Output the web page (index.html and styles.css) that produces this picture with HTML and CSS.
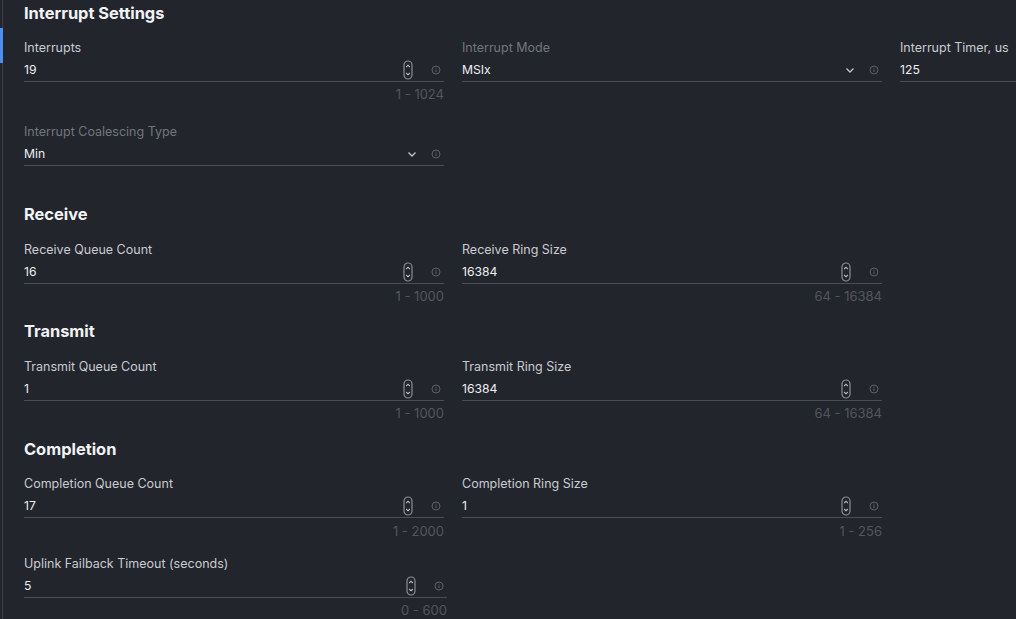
FILE: index.html
```html
<!DOCTYPE html>
<html>
<head>
<meta charset="utf-8">
<link rel="stylesheet" href="styles.css">
</head>
<body>
<div class="page">
  <div class="rail"><div class="rail-marker"></div></div>
  <main class="content">
    <section class="section section-interrupt">
      <h2 class="heading">Interrupt Settings</h2>
      <div class="grid grid-interrupt">
        <div class="field">
          <div class="label">Interrupts</div>
          <div class="input">
            <span class="value">19</span>
            <svg class="spin" width="10" height="20" viewBox="0 0 10 20"><rect x="1" y="1" width="8" height="18" rx="4" fill="none" stroke="#8b8e95" stroke-width="1.2"/><path d="M3.2 7 L5 5.2 L6.8 7" fill="none" stroke="#b9bcc1" stroke-width="1.1"/><path d="M3.2 13 L5 14.8 L6.8 13" fill="none" stroke="#b9bcc1" stroke-width="1.1"/></svg>
            <svg class="info" width="10" height="10" viewBox="0 0 10 10"><circle cx="5" cy="5" r="4" fill="none" stroke="#5d6067" stroke-width="1"/><path d="M5 4.3 V7" stroke="#5d6067" stroke-width="1"/><circle cx="5" cy="3" r="0.6" fill="#5d6067"/></svg>
          </div>
          <div class="hint">1 - 1024</div>
        </div>
        <div class="field">
          <div class="label label-dim">Interrupt Mode</div>
          <div class="input">
            <span class="value">MSIx</span>
            <svg class="chev" width="10" height="10" viewBox="0 0 10 10"><path d="M1.5 3.5 L5 7 L8.5 3.5" fill="none" stroke="#c3c5ca" stroke-width="1.3"/></svg>
            <svg class="info" width="10" height="10" viewBox="0 0 10 10"><circle cx="5" cy="5" r="4" fill="none" stroke="#5d6067" stroke-width="1"/><path d="M5 4.3 V7" stroke="#5d6067" stroke-width="1"/><circle cx="5" cy="3" r="0.6" fill="#5d6067"/></svg>
          </div>
        </div>
        <div class="field">
          <div class="label">Interrupt Timer, us</div>
          <div class="input">
            <span class="value">125</span>
          </div>
        </div>
        <div class="field">
          <div class="label label-dim">Interrupt Coalescing Type</div>
          <div class="input">
            <span class="value">Min</span>
            <svg class="chev" width="10" height="10" viewBox="0 0 10 10"><path d="M1.5 3.5 L5 7 L8.5 3.5" fill="none" stroke="#c3c5ca" stroke-width="1.3"/></svg>
            <svg class="info" width="10" height="10" viewBox="0 0 10 10"><circle cx="5" cy="5" r="4" fill="none" stroke="#5d6067" stroke-width="1"/><path d="M5 4.3 V7" stroke="#5d6067" stroke-width="1"/><circle cx="5" cy="3" r="0.6" fill="#5d6067"/></svg>
          </div>
          <div class="hint"></div>
        </div>
      </div>
    </section>

    <section class="section section-receive">
      <h2 class="heading">Receive</h2>
      <div class="grid">
        <div class="field">
          <div class="label">Receive Queue Count</div>
          <div class="input">
            <span class="value">16</span>
            <svg class="spin" width="10" height="20" viewBox="0 0 10 20"><rect x="1" y="1" width="8" height="18" rx="4" fill="none" stroke="#8b8e95" stroke-width="1.2"/><path d="M3.2 7 L5 5.2 L6.8 7" fill="none" stroke="#b9bcc1" stroke-width="1.1"/><path d="M3.2 13 L5 14.8 L6.8 13" fill="none" stroke="#b9bcc1" stroke-width="1.1"/></svg>
            <svg class="info" width="10" height="10" viewBox="0 0 10 10"><circle cx="5" cy="5" r="4" fill="none" stroke="#5d6067" stroke-width="1"/><path d="M5 4.3 V7" stroke="#5d6067" stroke-width="1"/><circle cx="5" cy="3" r="0.6" fill="#5d6067"/></svg>
          </div>
          <div class="hint">1 - 1000</div>
        </div>
        <div class="field">
          <div class="label">Receive Ring Size</div>
          <div class="input">
            <span class="value">16384</span>
            <svg class="spin" width="10" height="20" viewBox="0 0 10 20"><rect x="1" y="1" width="8" height="18" rx="4" fill="none" stroke="#8b8e95" stroke-width="1.2"/><path d="M3.2 7 L5 5.2 L6.8 7" fill="none" stroke="#b9bcc1" stroke-width="1.1"/><path d="M3.2 13 L5 14.8 L6.8 13" fill="none" stroke="#b9bcc1" stroke-width="1.1"/></svg>
            <svg class="info" width="10" height="10" viewBox="0 0 10 10"><circle cx="5" cy="5" r="4" fill="none" stroke="#5d6067" stroke-width="1"/><path d="M5 4.3 V7" stroke="#5d6067" stroke-width="1"/><circle cx="5" cy="3" r="0.6" fill="#5d6067"/></svg>
          </div>
          <div class="hint">64 - 16384</div>
        </div>
      </div>
    </section>

    <section class="section">
      <h2 class="heading">Transmit</h2>
      <div class="grid">
        <div class="field">
          <div class="label">Transmit Queue Count</div>
          <div class="input">
            <span class="value">1</span>
            <svg class="spin" width="10" height="20" viewBox="0 0 10 20"><rect x="1" y="1" width="8" height="18" rx="4" fill="none" stroke="#8b8e95" stroke-width="1.2"/><path d="M3.2 7 L5 5.2 L6.8 7" fill="none" stroke="#b9bcc1" stroke-width="1.1"/><path d="M3.2 13 L5 14.8 L6.8 13" fill="none" stroke="#b9bcc1" stroke-width="1.1"/></svg>
            <svg class="info" width="10" height="10" viewBox="0 0 10 10"><circle cx="5" cy="5" r="4" fill="none" stroke="#5d6067" stroke-width="1"/><path d="M5 4.3 V7" stroke="#5d6067" stroke-width="1"/><circle cx="5" cy="3" r="0.6" fill="#5d6067"/></svg>
          </div>
          <div class="hint">1 - 1000</div>
        </div>
        <div class="field">
          <div class="label">Transmit Ring Size</div>
          <div class="input">
            <span class="value">16384</span>
            <svg class="spin" width="10" height="20" viewBox="0 0 10 20"><rect x="1" y="1" width="8" height="18" rx="4" fill="none" stroke="#8b8e95" stroke-width="1.2"/><path d="M3.2 7 L5 5.2 L6.8 7" fill="none" stroke="#b9bcc1" stroke-width="1.1"/><path d="M3.2 13 L5 14.8 L6.8 13" fill="none" stroke="#b9bcc1" stroke-width="1.1"/></svg>
            <svg class="info" width="10" height="10" viewBox="0 0 10 10"><circle cx="5" cy="5" r="4" fill="none" stroke="#5d6067" stroke-width="1"/><path d="M5 4.3 V7" stroke="#5d6067" stroke-width="1"/><circle cx="5" cy="3" r="0.6" fill="#5d6067"/></svg>
          </div>
          <div class="hint">64 - 16384</div>
        </div>
      </div>
    </section>

    <section class="section section-completion">
      <h2 class="heading">Completion</h2>
      <div class="grid grid-completion">
        <div class="field">
          <div class="label">Completion Queue Count</div>
          <div class="input">
            <span class="value">17</span>
            <svg class="spin" width="10" height="20" viewBox="0 0 10 20"><rect x="1" y="1" width="8" height="18" rx="4" fill="none" stroke="#8b8e95" stroke-width="1.2"/><path d="M3.2 7 L5 5.2 L6.8 7" fill="none" stroke="#b9bcc1" stroke-width="1.1"/><path d="M3.2 13 L5 14.8 L6.8 13" fill="none" stroke="#b9bcc1" stroke-width="1.1"/></svg>
            <svg class="info" width="10" height="10" viewBox="0 0 10 10"><circle cx="5" cy="5" r="4" fill="none" stroke="#5d6067" stroke-width="1"/><path d="M5 4.3 V7" stroke="#5d6067" stroke-width="1"/><circle cx="5" cy="3" r="0.6" fill="#5d6067"/></svg>
          </div>
          <div class="hint hint-low">1 - 2000</div>
        </div>
        <div class="field">
          <div class="label">Completion Ring Size</div>
          <div class="input">
            <span class="value">1</span>
            <svg class="spin" width="10" height="20" viewBox="0 0 10 20"><rect x="1" y="1" width="8" height="18" rx="4" fill="none" stroke="#8b8e95" stroke-width="1.2"/><path d="M3.2 7 L5 5.2 L6.8 7" fill="none" stroke="#b9bcc1" stroke-width="1.1"/><path d="M3.2 13 L5 14.8 L6.8 13" fill="none" stroke="#b9bcc1" stroke-width="1.1"/></svg>
            <svg class="info" width="10" height="10" viewBox="0 0 10 10"><circle cx="5" cy="5" r="4" fill="none" stroke="#5d6067" stroke-width="1"/><path d="M5 4.3 V7" stroke="#5d6067" stroke-width="1"/><circle cx="5" cy="3" r="0.6" fill="#5d6067"/></svg>
          </div>
          <div class="hint hint-low">1 - 256</div>
        </div>
      </div>
      <div class="field field-wide">
        <div class="label">Uplink Failback Timeout (seconds)</div>
        <div class="input">
          <span class="value">5</span>
          <svg class="spin" width="10" height="20" viewBox="0 0 10 20"><rect x="1" y="1" width="8" height="18" rx="4" fill="none" stroke="#8b8e95" stroke-width="1.2"/><path d="M3.2 7 L5 5.2 L6.8 7" fill="none" stroke="#b9bcc1" stroke-width="1.1"/><path d="M3.2 13 L5 14.8 L6.8 13" fill="none" stroke="#b9bcc1" stroke-width="1.1"/></svg>
          <svg class="info" width="10" height="10" viewBox="0 0 10 10"><circle cx="5" cy="5" r="4" fill="none" stroke="#5d6067" stroke-width="1"/><path d="M5 4.3 V7" stroke="#5d6067" stroke-width="1"/><circle cx="5" cy="3" r="0.6" fill="#5d6067"/></svg>
        </div>
        <div class="hint">0 - 600</div>
      </div>
    </section>
  </main>
</div>
</body>
</html>
```

FILE: styles.css
```css
html, body {
  margin: 0;
  padding: 0;
  background: #22252c;
  height: 100%;
  overflow: hidden;
}

body {
  font-family: Inter, "Noto Sans", sans-serif;
  color: #e6e7ea;
}

.page {
  display: flex;
  height: 619px;
  width: 1016px;
  overflow: hidden;
}

.rail {
  position: relative;
  flex: 0 0 3px;
  border-right: 1px solid #3b3e46;
  box-sizing: border-box;
  width: 3px;
}

.rail-marker {
  position: absolute;
  left: 0;
  top: 28px;
  width: 3px;
  height: 35px;
  background: #4f8ef2;
}

.content {
  flex: 1;
  padding-left: 21px;
  padding-top: 3px;
  min-width: 0;
}

.section {
  margin-bottom: 18px;
}

.section-interrupt {
  margin-bottom: 18px;
}

.section-receive {
  margin-bottom: 17px;
}

.heading {
  margin: 0 0 17px 0;
  font-size: 16.4px;
  line-height: 20px;
  font-weight: 700;
  color: #f2f3f5;
}

.section-interrupt .heading,
.section-completion .heading {
  margin-bottom: 16px;
}

.grid {
  display: grid;
  grid-template-columns: 420px 420px 420px;
  column-gap: 18px;
  row-gap: 16px;
}

.grid-interrupt {
  row-gap: 21px;
}

.grid-completion {
  margin-bottom: 16px;
}

.field {
  display: flex;
  flex-direction: column;
  min-width: 0;
}

.field-wide {
  width: 423px;
}

.label {
  padding-top: 1px;
  font-size: 12.5px;
  line-height: 16px;
  color: #c9cbd0;
  white-space: nowrap;
}

.label-dim {
  color: #72757c;
}

.input {
  display: flex;
  align-items: center;
  margin-top: 5px;
  height: 20px;
  border-bottom: 1px solid #4b4e56;
}

.value {
  flex: 1;
  font-size: 12.2px;
  line-height: 18px;
  color: #eceef1;
  margin-bottom: 2px;
}

.spin {
  flex: none;
  margin-right: 18px;
  margin-bottom: 2px;
}

.chev {
  flex: none;
  margin-right: 14px;
  margin-bottom: 2px;
}

.info {
  flex: none;
  margin-right: 3px;
  margin-bottom: 2px;
}

.hint {
  margin-top: 4px;
  font-size: 13px;
  line-height: 16px;
  height: 16px;
  color: #53565d;
  text-align: right;
}

.hint-low {
  margin-top: 5px;
}
```
